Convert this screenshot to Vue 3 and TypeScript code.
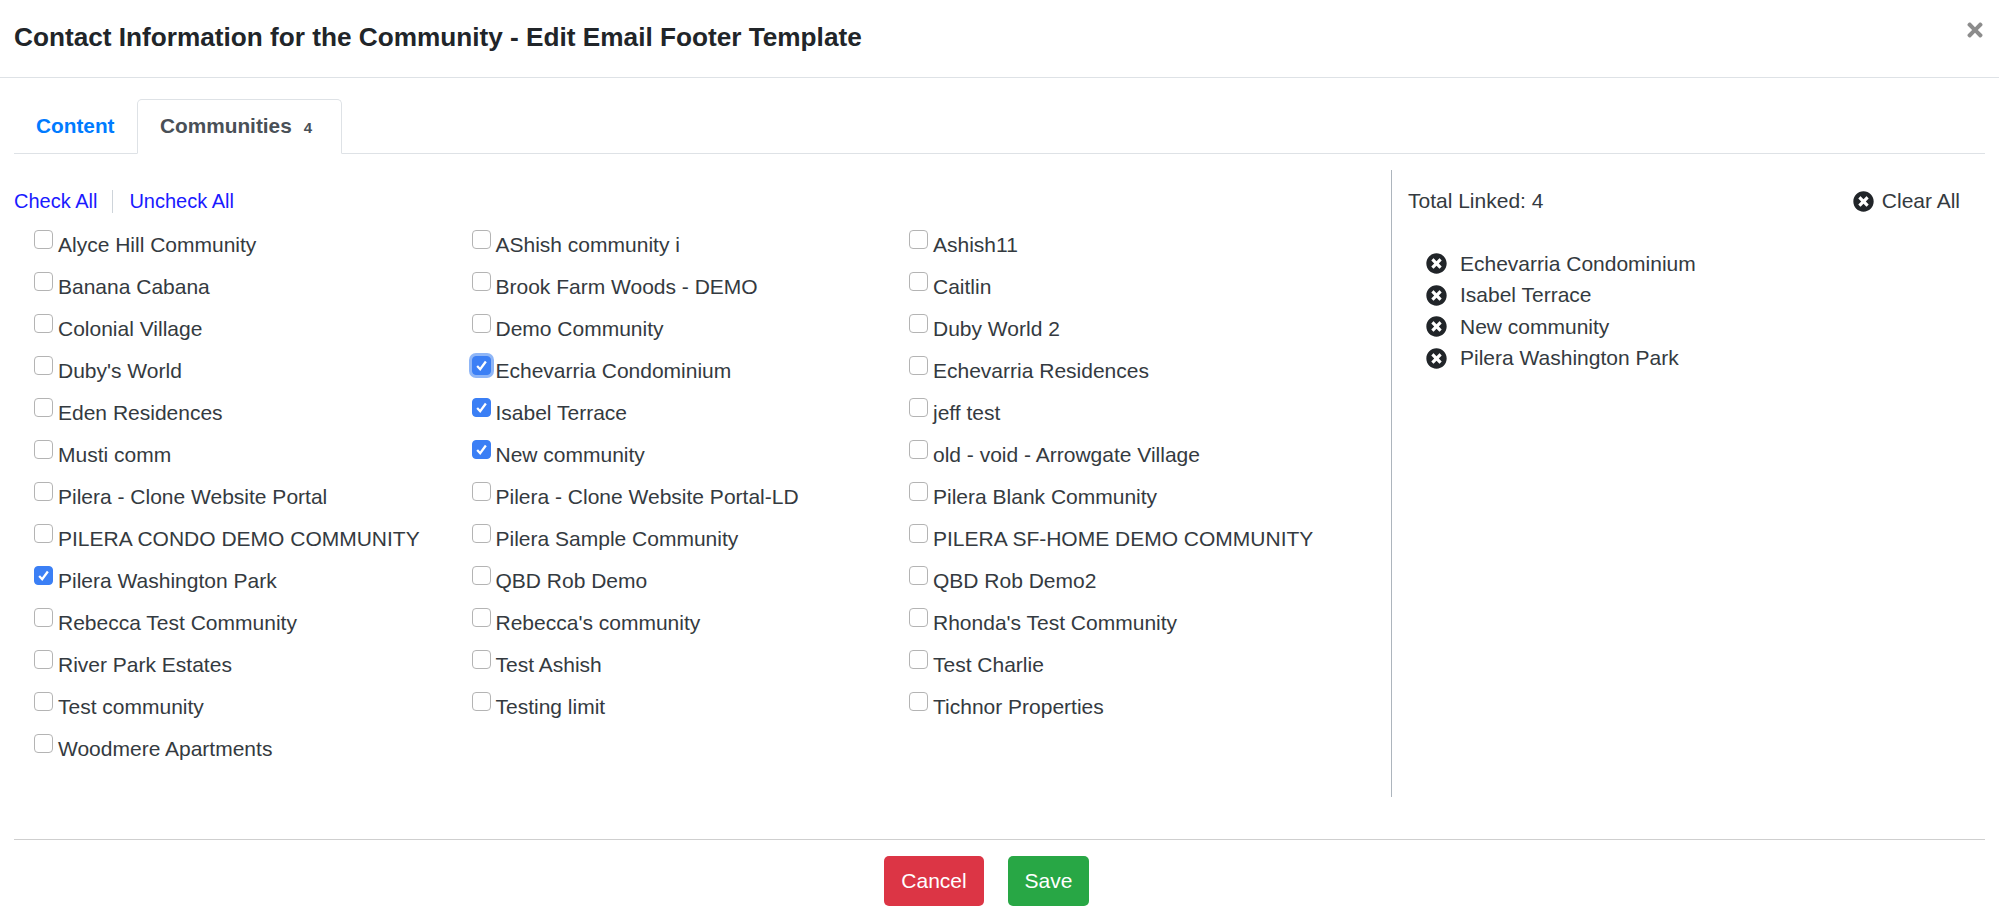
<template>
  <div class="modal">
    <header class="modal-header">
      <h1>Contact Information for the Community - Edit Email Footer Template</h1>
      <svg class="close" viewBox="0 0 352 512" aria-label="Close">
        <path :d="timesPath" />
      </svg>
    </header>

    <nav class="tabs">
      <a class="tab tab-link">Content</a>
      <a class="tab tab-active">Communities <span class="count">4</span></a>
    </nav>

    <section class="panes">
      <div class="picker">
        <div class="bulk">
          <a>Check All</a>
          <span class="sep"></span>
          <a>Uncheck All</a>
        </div>
        <div class="grid">
          <label v-for="c in communities" :key="c" class="row">
            <span class="box" :class="{ on: linked.includes(c), focus: c === focused }">
              <svg v-if="linked.includes(c)" viewBox="0 0 18 18">
                <path d="M4.4 9.6 7.6 13 13.6 4.8" />
              </svg>
            </span>
            <span>{{ c }}</span>
          </label>
        </div>
      </div>

      <aside class="summary">
        <div class="summary-top">
          <span>Total Linked: {{ linked.length }}</span>
          <span class="clear">
            <svg class="x-circle" viewBox="0 0 512 512"><path :d="circlePath" /></svg>
            Clear All
          </span>
        </div>
        <ul>
          <li v-for="c in linked" :key="c">
            <svg class="x-circle" viewBox="0 0 512 512"><path :d="circlePath" /></svg>
            {{ c }}
          </li>
        </ul>
      </aside>
    </section>

    <footer class="modal-footer">
      <button class="btn cancel">Cancel</button>
      <button class="btn save">Save</button>
    </footer>
  </div>
</template>

<script setup lang="ts">
const timesPath =
  "M242.72 256l100.07-100.07c12.28-12.28 12.28-32.19 0-44.48l-22.24-22.24c-12.28-12.28-32.19-12.28-44.48 0L176 189.28 75.93 89.21c-12.28-12.28-32.19-12.28-44.48 0L9.21 111.45c-12.28 12.28-12.28 32.19 0 44.48L109.28 256 9.21 356.07c-12.28 12.28-12.28 32.19 0 44.48l22.24 22.24c12.28 12.28 32.2 12.28 44.48 0L176 322.72l100.07 100.07c12.28 12.28 32.2 12.28 44.48 0l22.24-22.24c12.28-12.28 12.28-32.19 0-44.48L242.72 256z";
const circlePath =
  "M256 8C119 8 8 119 8 256s111 248 248 248 248-111 248-248S393 8 256 8zm121.6 313.1c4.7 4.7 4.7 12.3 0 17L338 377.6c-4.7 4.7-12.3 4.7-17 0L256 312l-65.1 65.6c-4.7 4.7-12.3 4.7-17 0L134.4 338c-4.7-4.7-4.7-12.3 0-17l65.6-65-65.6-65.1c-4.7-4.7-4.7-12.3 0-17l39.6-39.6c4.7-4.7 12.3-4.7 17 0l65 65.7 65.1-65.6c4.7-4.7 12.3-4.7 17 0l39.6 39.6c4.7 4.7 4.7 12.3 0 17L312 256l65.6 65.1z";

const communities: string[] = [
  "Alyce Hill Community",
  "AShish community i",
  "Ashish11",
  "Banana Cabana",
  "Brook Farm Woods - DEMO",
  "Caitlin",
  "Colonial Village",
  "Demo Community",
  "Duby World 2",
  "Duby's World",
  "Echevarria Condominium",
  "Echevarria Residences",
  "Eden Residences",
  "Isabel Terrace",
  "jeff test",
  "Musti comm",
  "New community",
  "old - void - Arrowgate Village",
  "Pilera - Clone Website Portal",
  "Pilera - Clone Website Portal-LD",
  "Pilera Blank Community",
  "PILERA CONDO DEMO COMMUNITY",
  "Pilera Sample Community",
  "PILERA SF-HOME DEMO COMMUNITY",
  "Pilera Washington Park",
  "QBD Rob Demo",
  "QBD Rob Demo2",
  "Rebecca Test Community",
  "Rebecca's community",
  "Rhonda's Test Community",
  "River Park Estates",
  "Test Ashish",
  "Test Charlie",
  "Test community",
  "Testing limit",
  "Tichnor Properties",
  "Woodmere Apartments",
];

const linked: string[] = [
  "Echevarria Condominium",
  "Isabel Terrace",
  "New community",
  "Pilera Washington Park",
];
const focused = "Echevarria Condominium";
</script>

<style scoped>
.modal {
  height: 918px;
  box-sizing: border-box;
  background: #fff;
  color: #343a40;
  font-family: "Liberation Sans", Arial, sans-serif;
  font-size: 21px;
  display: flex;
  flex-direction: column;
}

.modal-header {
  height: 78px;
  flex: none;
  box-sizing: border-box;
  border-bottom: 1px solid #dee2e6;
  padding: 0 16px 3px 14px;
  display: flex;
  align-items: center;
  justify-content: space-between;
}

.modal-header h1 {
  margin: 0;
  font-size: 26.2px;
  font-weight: 700;
  color: #212529;
}

.close {
  width: 16px;
  height: 22px;
  margin-top: -15px;
  fill: #8c8c8c;
}

.tabs {
  margin: 21px 14px 0;
  height: 55px;
  flex: none;
  box-sizing: border-box;
  border-bottom: 1px solid #dee2e6;
  display: flex;
  font-size: 20.8px;
  font-weight: 700;
}

.tab {
  display: flex;
  align-items: center;
  gap: 5px;
  box-sizing: border-box;
  height: 55px;
  padding: 0 22px 2px;
}

.tab-link {
  color: #007bff;
  width: 123px;
}

.tab-active {
  width: 205px;
  color: #495057;
  background: #fff;
  border: 1px solid #dee2e6;
  border-bottom-color: #fff;
  border-radius: 5px 5px 0 0;
}

.count {
  margin-left: 7px;
  font-size: 15px;
  margin-top: 3px;
}

.panes {
  margin: 16px 14px 0;
  height: 627px;
  flex: none;
  display: flex;
}

.picker {
  width: 1378px;
  flex: none;
  box-sizing: border-box;
  border-right: 1px solid #adb5bd;
}

.bulk {
  height: 24px;
  margin-top: 19px;
  display: flex;
  align-items: center;
  font-size: 20px;
  color: #1a1aff;
}

.sep {
  width: 1px;
  height: 23px;
  background: #ced4da;
  margin: 0 16px 0 15px;
}

.grid {
  margin-top: 11px;
  padding-left: 20px;
  display: grid;
  grid-template-columns: repeat(3, 437.5px);
  grid-auto-rows: 42px;
}

.row {
  display: flex;
  align-items: center;
  gap: 5px;
  white-space: nowrap;
}

.box {
  width: 19px;
  height: 19px;
  margin-top: -12px;
  box-sizing: border-box;
  border: 1px solid #b4b4b4;
  border-radius: 4px;
  background: #fff;
  flex: none;
  display: flex;
}

.box.on {
  background: #3b7ff5;
  border-color: #3b7ff5;
}

.box.focus {
  box-shadow: 0 0 0 3px #8fb6f7;
}

.box svg {
  width: 100%;
  height: 100%;
  fill: none;
  stroke: #fff;
  stroke-width: 2.4;
}

.summary {
  flex: 1;
  padding: 19px 25px 0 16px;
}

.summary-top {
  height: 24px;
  display: flex;
  align-items: center;
  justify-content: space-between;
}

.clear {
  display: flex;
  align-items: center;
  gap: 8px;
}

.x-circle {
  width: 21px;
  height: 21px;
  fill: #212529;
  flex: none;
}

ul {
  list-style: none;
  margin: 35px 0 0;
  padding: 0 0 0 18px;
}

li {
  height: 31.5px;
  display: flex;
  align-items: center;
  gap: 13px;
}

.modal-footer {
  margin: 42px 14px 0;
  padding: 16px 26px 0 0;
  border-top: 1px solid #cfcfcf;
  display: flex;
  justify-content: center;
  gap: 24px;
}

.btn {
  height: 50px;
  padding: 0;
  border: none;
  border-radius: 5px;
  color: #fff;
  font: inherit;
  font-weight: 400;
}

.cancel {
  width: 100px;
  background: #dc3545;
}

.save {
  width: 81px;
  background: #28a745;
}
</style>
